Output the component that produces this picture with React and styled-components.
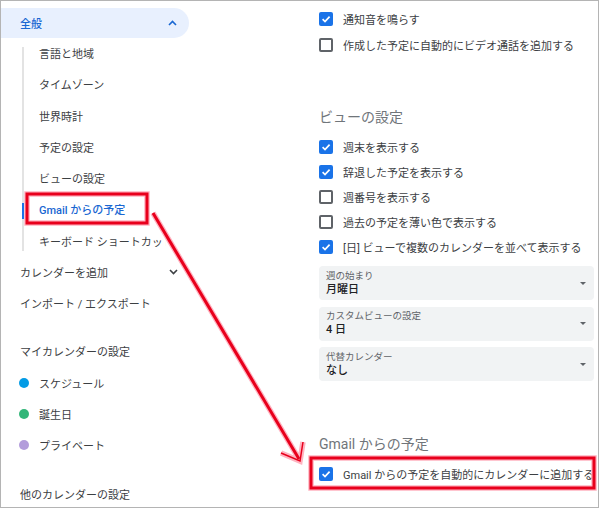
import React from 'react';
import styled, { createGlobalStyle } from 'styled-components';

const Global = createGlobalStyle`
  html, body { margin: 0; padding: 0; background: #fff; }
  body { font-family: Roboto, "Noto Sans CJK JP", sans-serif; }
`;

const Frame = styled.div`
  position: relative;
  width: 599px; height: 508px; box-sizing: border-box;
  border: 1px solid #b4b4b4;
  overflow: hidden;
  display: grid; grid-template-columns: 189px 1fr;
  font-size: 11px; color: #3c4043;
`;

const Side = styled.nav`
  display: flex; flex-direction: column; padding-top: 7px;
`;

const Pill = styled.div`
  height: 30px; width: 188px; box-sizing: border-box; flex: none;
  background: #e8f0fe; border-radius: 0 15px 15px 0;
  display: flex; align-items: center; justify-content: space-between;
  padding: 0 12px 0 19px; color: #1967d2; font-weight: 500;
`;

const SubList = styled.div`
  position: relative; margin-left: 21px; width: 144px; padding-top: 1px; margin-bottom: -2px;
  &::before {
    content: ''; position: absolute; left: 0; top: 9px; bottom: 7px;
    width: 2px; background: #e3e3e3;
  }
`;

const SubItem = styled.div`
  position: relative; height: 31.3px; line-height: 31.3px; padding-left: 17px;
  white-space: nowrap; overflow: hidden;
  color: ${p => (p.$active ? '#1967d2' : '#3c4043')};
  font-weight: ${p => (p.$active ? 500 : 400)};
  &::before {
    content: ''; position: absolute; left: -1px; top: 8px; width: 3px; height: 16px;
    background: ${p => (p.$active ? '#1a73e8' : 'transparent')};
  }
`;

const NavRow = styled.div`
  height: 31.3px; flex: none; display: flex; align-items: center; justify-content: space-between;
  padding: 0 12px 0 19px; margin-top: ${p => p.$mt || 0}px;
`;

const CalRow = styled.div`
  height: 31.3px; flex: none; display: flex; align-items: center; gap: 10px; padding-left: 18px;
`;

const Dot = styled.span`
  width: 10px; height: 10px; border-radius: 50%; background: ${p => p.$c};
`;

const Main = styled.main`
  display: flex; flex-direction: column; padding: 5px 4px 0 129px;
`;

const CheckRow = styled.label`
  height: ${p => p.$h || 25}px; flex: none; display: flex; align-items: center; gap: 10px;
  white-space: nowrap; color: #3c4043;
`;

const Box = styled.span`
  width: 14px; height: 14px; box-sizing: border-box; border-radius: 2px; flex: none;
  display: flex; align-items: center; justify-content: center;
  background: ${p => (p.$on ? '#1a73e8' : '#fff')};
  border: ${p => (p.$on ? 'none' : '2px solid #5f6368')};
`;

const Heading = styled.h2`
  margin: ${p => p.$mt}px 0 7px; font-size: 14px; line-height: 20px;
  font-weight: 400; color: #70757a;
`;

const Selects = styled.div`
  display: flex; flex-direction: column; gap: 6.5px; margin-top: 7px; width: 275px;
`;

const Select = styled.div`
  height: 34px; box-sizing: border-box; background: #f1f3f4; border-radius: 4px;
  display: flex; align-items: center; justify-content: space-between;
  padding: 0 8px 0 7px;
`;

const SelText = styled.div`
  display: flex; flex-direction: column;
`;

const SelLabel = styled.span`
  font-size: 9.5px; line-height: 12px; color: #5f6368;
`;

const SelValue = styled.span`
  font-size: 11px; line-height: 15px; color: #202124; font-weight: 500;
`;

const Caret = styled.span`
  width: 0; height: 0; border-left: 3px solid transparent; border-right: 3px solid transparent;
  border-top: 3px solid #5f6368;
`;

const Overlay = styled.svg`
  position: absolute; left: -1px; top: -1px; pointer-events: none;
`;

const Check = () => (
  <svg width="10" height="10" viewBox="0 0 10 10">
    <path d="M1.6 5.2 L4 7.5 L8.6 2.6" fill="none" stroke="#fff" strokeWidth="1.7" />
  </svg>
);

const Chevron = ({ up, color }) => (
  <svg width="9" height="6" viewBox="0 0 9 6">
    <path d={up ? 'M1 5 L4.5 1.5 L8 5' : 'M1 1 L4.5 4.5 L8 1'} fill="none" stroke={color} strokeWidth="1.6" />
  </svg>
);

const Option = ({ on, children, h }) => (
  <CheckRow $h={h}>
    <Box $on={on}>{on && <Check />}</Box>
    {children}
  </CheckRow>
);

const subs = ['言語と地域', 'タイムゾーン', '世界時計', '予定の設定', 'ビューの設定', 'Gmail からの予定', 'キーボード ショートカット'];

export default function App() {
  return (
    <>
      <Global />
      <Frame>
        <Side>
          <Pill>全般<Chevron up color="#1967d2" /></Pill>
          <SubList>
            {subs.map(s => (
              <SubItem key={s} $active={s.startsWith('Gmail')}>{s}</SubItem>
            ))}
          </SubList>
          <NavRow>カレンダーを追加<Chevron color="#3c4043" /></NavRow>
          <NavRow>インポート / エクスポート</NavRow>
          <NavRow $mt={17}>マイカレンダーの設定</NavRow>
          <CalRow><Dot $c="#039be5" />スケジュール</CalRow>
          <CalRow><Dot $c="#33b679" />誕生日</CalRow>
          <CalRow><Dot $c="#b39ddb" />プライベート</CalRow>
          <NavRow $mt={17}>他のカレンダーの設定</NavRow>
        </Side>
        <Main>
          <Option on h={26}>通知音を鳴らす</Option>
          <Option h={26}>作成した予定に自動的にビデオ通話を追加する</Option>
          <Heading $mt={49}>ビューの設定</Heading>
          <Option on>週末を表示する</Option>
          <Option on>辞退した予定を表示する</Option>
          <Option>週番号を表示する</Option>
          <Option>過去の予定を薄い色で表示する</Option>
          <Option on>[日] ビューで複数のカレンダーを並べて表示する</Option>
          <Selects>
            <Select><SelText><SelLabel>週の始まり</SelLabel><SelValue>月曜日</SelValue></SelText><Caret /></Select>
            <Select><SelText><SelLabel>カスタムビューの設定</SelLabel><SelValue>4 日</SelValue></SelText><Caret /></Select>
            <Select><SelText><SelLabel>代替カレンダー</SelLabel><SelValue>なし</SelValue></SelText><Caret /></Select>
          </Selects>
          <Heading $mt={53}>Gmail からの予定</Heading>
          <Option on>Gmail からの予定を自動的にカレンダーに追加する</Option>
        </Main>
        <Overlay width="600" height="509" viewBox="0 0 600 509">
          <g fill="none" stroke="#ffb3c0" strokeWidth="5.5" strokeLinejoin="miter">
            <rect x="27" y="194" width="120" height="29" />
            <rect x="311" y="458" width="283" height="30" />
            <path d="M153 213 L299 459 M281 453 L300 461 L303 442" />
          </g>
          <g fill="none" stroke="#e8001c" strokeWidth="3" strokeLinejoin="miter">
            <rect x="27" y="194" width="120" height="29" />
            <rect x="311" y="458" width="283" height="30" />
            <path d="M153 213 L299 459" />
          </g>
          <path d="M281 453 L300 461 L303 442" fill="none" stroke="#e8001c" strokeWidth="1.5" />
        </Overlay>
      </Frame>
    </>
  );
}
